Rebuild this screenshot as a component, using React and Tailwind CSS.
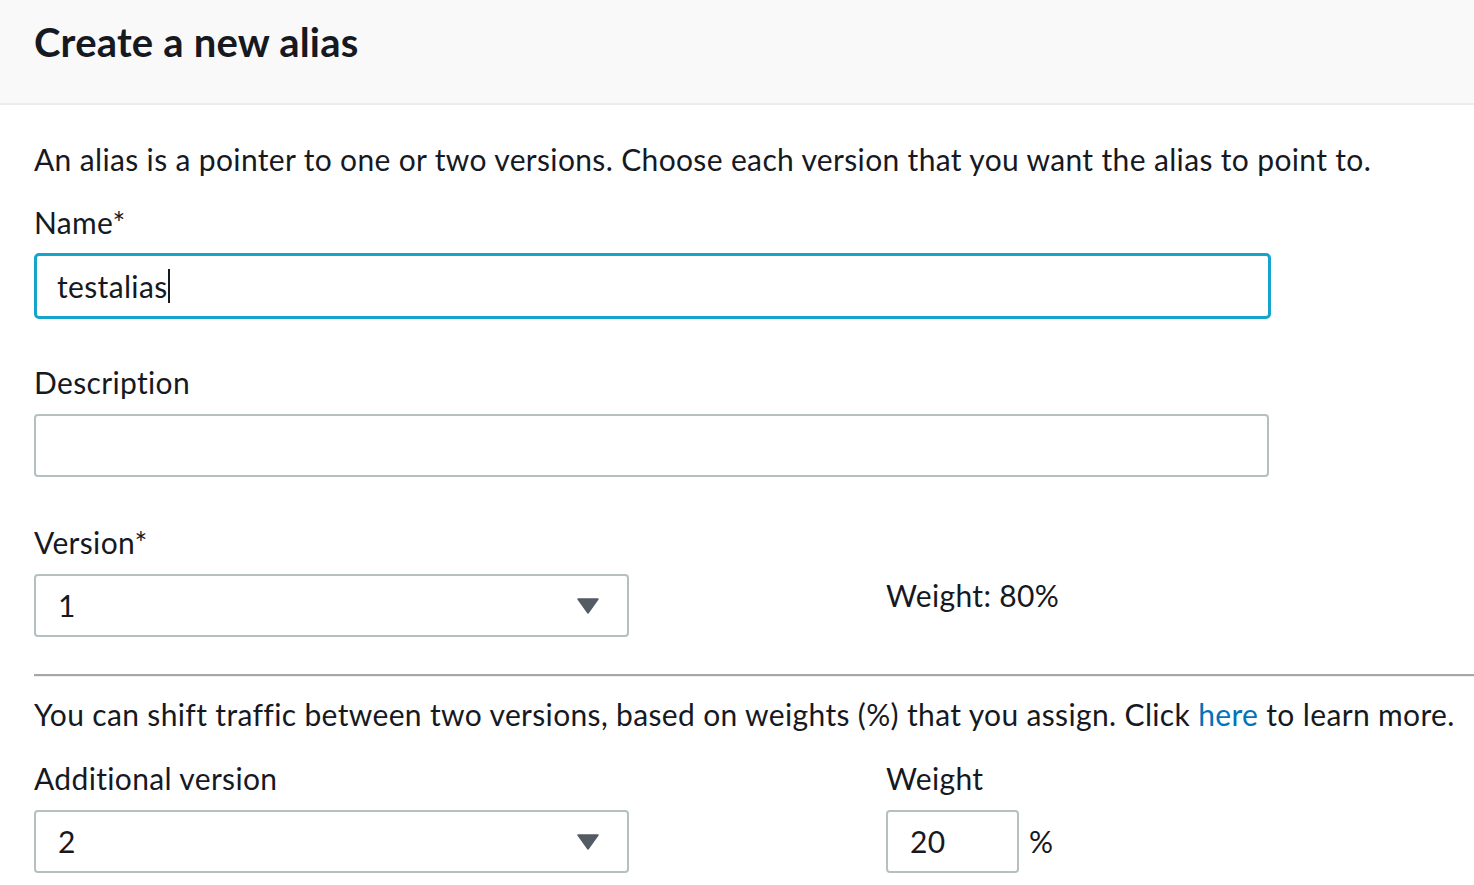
export default function App() {
  const font = { fontFamily: "Lato, 'Noto Sans', sans-serif" };
  return (
    <div className="w-[1474px] h-[885px] overflow-hidden bg-white text-[#16191f] tracking-[0.35px]" style={font}>
      <div className="h-[105px] bg-[#f9f9f9] border-b-2 border-[#eaeded] pl-[34px] flex items-center">
        <h1 className="text-[40px] font-bold leading-none pb-[19px] tracking-[0.2px]">Create a new alias</h1>
      </div>
      <div className="pl-[34px] pt-[36px]">
        <p className="text-[30px] leading-[36px] whitespace-nowrap">
          An alias is a pointer to one or two versions. Choose each version that you want the alias to point to.
        </p>
        <div className="mt-[27px] text-[30px] leading-[36px]">Name*</div>
        <div className="mt-[13px] w-[1237px] h-[66px] border-[3px] border-[#14a4cc] rounded-[5px] flex items-center pl-[20px] text-[30px]">
          <span>testalias</span>
          <span className="inline-block w-[2px] h-[34px] bg-[#16191f]"></span>
        </div>
        <div className="mt-[45px] text-[30px] leading-[36px]">Description</div>
        <div className="mt-[14px] w-[1235px] h-[63px] border-2 border-[#b5c0c1] rounded-[4px]"></div>
        <div className="mt-[47px] grid grid-cols-[595px_1fr] gap-x-[257px]">
          <div>
            <div className="text-[30px] leading-[36px]">Version*</div>
            <div className="mt-[14px] h-[63px] border-2 border-[#b5c0c1] rounded-[4px] flex items-center justify-between pl-[22px] pr-[28px] text-[30px]">
              <span>1</span>
              <svg width="22" height="16" viewBox="0 0 22 16"><path d="M1 1 L21 1 L11 15 Z" fill="#545b64" stroke="#545b64" strokeWidth="1.5" strokeLinejoin="round" /></svg>
            </div>
          </div>
          <div className="pt-[53px] text-[30px] leading-[36px]">Weight: 80%</div>
        </div>
        <div className="mt-[37px] h-[3px] border-t-2 border-[#a6a6a6] bg-[#eeeeee]"></div>
        <p className="mt-[19px] text-[30px] leading-[36px] whitespace-nowrap">
          You can shift traffic between two versions, based on weights (%) that you assign. Click <span className="text-[#0073bb]">here</span> to learn more.
        </p>
        <div className="mt-[28px] grid grid-cols-[595px_1fr] gap-x-[257px]">
          <div>
            <div className="text-[30px] leading-[36px]">Additional version</div>
            <div className="mt-[14px] h-[63px] border-2 border-[#b5c0c1] rounded-[4px] flex items-center justify-between pl-[22px] pr-[28px] text-[30px]">
              <span>2</span>
              <svg width="22" height="16" viewBox="0 0 22 16"><path d="M1 1 L21 1 L11 15 Z" fill="#545b64" stroke="#545b64" strokeWidth="1.5" strokeLinejoin="round" /></svg>
            </div>
          </div>
          <div>
            <div className="text-[30px] leading-[36px]">Weight</div>
            <div className="mt-[14px] flex items-center">
              <div className="w-[133px] h-[63px] border-2 border-[#b5c0c1] rounded-[4px] flex items-center pl-[22px] text-[30px]">20</div>
              <span className="ml-[10px] text-[30px]">%</span>
            </div>
          </div>
        </div>
      </div>
    </div>
  );
}
